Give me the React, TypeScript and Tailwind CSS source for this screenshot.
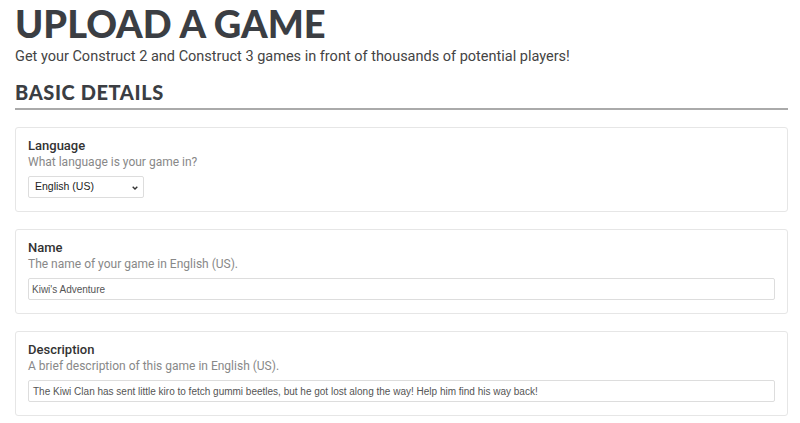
import React from "react";

function Card({ label, sub, children }: { label: string; sub: React.ReactNode; children: React.ReactNode }) {
  return (
    <div className="border border-[#e6e6e6] rounded-[3px] px-3 pt-[10px] pb-[13px] bg-white">
      <div className="text-[13px] leading-[16px] font-medium text-[#333]">{label}</div>
      <div className="text-[12px] leading-[16px] text-[#888]">{sub}</div>
      <div className="mt-[6px]">{children}</div>
    </div>
  );
}

export default function App() {
  return (
    <div className="min-h-[423px] bg-white pl-[15px] pr-[12px] font-['Roboto',sans-serif] text-[#444]">
      <h1 className="pt-[3px] text-[38px] leading-[40px] font-black text-[#3b3e43] font-['Lato',sans-serif]">
        UPLOAD A GAME
      </h1>
      <p className="mt-[4px] text-[14.5px] leading-[20px] text-[#444]">
        Get your Construct 2 and Construct 3 games in front of thousands of potential players!
      </p>
      <h2 className="mt-[13px] pb-[4px] border-b-2 border-[#aaa] text-[20px] leading-[24px] font-black tracking-[0.6px] text-[#3b3e43] font-['Lato',sans-serif]">
        BASIC DETAILS
      </h2>
      <div className="mt-[17px] flex flex-col gap-[17px]">
        <Card label="Language" sub="What language is your game in?">
          <div className="relative w-[116px] h-[22px] border border-[#ddd] rounded-[2px] bg-white flex items-center pl-[6px] font-['Liberation_Sans',Arial,sans-serif] text-[10.5px] text-[#222]">
            English (US)
            <svg className="absolute right-[5px] top-[9px]" width="6" height="4" viewBox="0 0 6 4">
              <path d="M0.7 0.7 L3 3 L5.3 0.7" fill="none" stroke="#333" strokeWidth="1.4" />
            </svg>
          </div>
        </Card>
        <Card label="Name" sub="The name of your game in English (US).">
          <div className="h-[22px] border border-[#ddd] rounded-[2px] bg-white flex items-center px-[3px] font-['Liberation_Sans',Arial,sans-serif] text-[10px] text-[#555]">
            Kiwi's Adventure
          </div>
        </Card>
        <Card label="Description" sub="A brief description of this game in English (US).">
          <div className="h-[22px] border border-[#ddd] rounded-[2px] bg-white flex items-center px-[4px] font-['Liberation_Sans',Arial,sans-serif] text-[10px] text-[#555]">
            The Kiwi Clan has sent little kiro to fetch gummi beetles, but he got lost along the way! Help him find his way back!
          </div>
        </Card>
      </div>
    </div>
  );
}
